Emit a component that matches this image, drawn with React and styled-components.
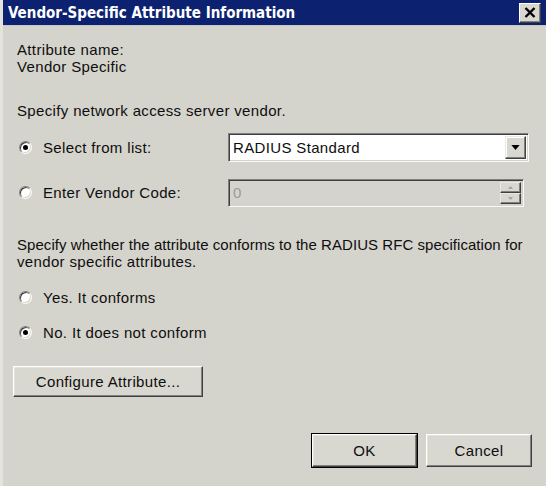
import React from "react";
import styled, { createGlobalStyle } from "styled-components";

const Global = createGlobalStyle`
  html, body { margin: 0; padding: 0; background: #d5d4cc; }
  body { font-family: "Liberation Sans", Arial, sans-serif; }
  * { box-sizing: border-box; }
`;

const Window = styled.div`
  width: 546px;
  height: 486px;
  display: flex;
  flex-direction: column;
  background: #d5d4cc;
  border-left: 3px solid #e4e4de;
  color: #0e0e0e;
  font-size: 15px;
  letter-spacing: 0.35px;
  overflow: hidden;
`;

const TitleBar = styled.div`
  height: 26px;
  flex: none;
  display: flex;
  align-items: center;
  justify-content: space-between;
  padding: 0 5px 0 5px;
  background: #0c2270;
  border-bottom: 1px solid #c9c8c0;
`;

const TitleText = styled.span`
  color: #fff;
  font-family: "DejaVu Sans Condensed", "DejaVu Sans", sans-serif;
  font-weight: bold;
  font-size: 15px;
  letter-spacing: 0;
`;

const CloseButton = styled.div`
  width: 22px;
  height: 20px;
  background: #d8d7d0;
  border: 1px solid;
  border-color: #fff #404040 #404040 #fff;
  box-shadow: inset -1px -1px 0 #808080;
  display: flex;
  align-items: center;
  justify-content: center;
`;

const Content = styled.div`
  flex: 1;
  display: flex;
  flex-direction: column;
  padding: 15px 14px 19px 14px;
`;

const Line = styled.div`
  line-height: 17px;
  white-space: nowrap;
  margin-top: ${(p) => p.$mt || 0}px;
  ${(p) => (p.$ls != null ? `letter-spacing: ${p.$ls}px;` : "")}
`;

const Row = styled.div`
  display: grid;
  grid-template-columns: 211px 1fr;
  align-items: center;
  height: ${(p) => p.$h || 29}px;
  margin-top: ${(p) => p.$mt || 0}px;
`;

const RadioLabel = styled.label`
  display: flex;
  align-items: center;
  gap: 11px;
  padding-left: 2px;
  line-height: 17px;
  white-space: nowrap;
  height: ${(p) => p.$h || 20}px;
  margin-top: ${(p) => p.$mt || 0}px;
`;

const RadioDot = styled.span`
  width: 13px;
  height: 13px;
  flex: none;
  border-radius: 50%;
  background: #fff;
  border: 1px solid;
  border-color: #7f7f7f #fafafa #fafafa #7f7f7f;
  box-shadow: inset 1px 1px 0 #404040, inset -1px -1px 0 #d4d3cb;
  position: relative;
  &::after {
    content: "";
    display: ${(p) => (p.$checked ? "block" : "none")};
    position: absolute;
    left: 3px;
    top: 3px;
    width: 5px;
    height: 5px;
    border-radius: 50%;
    background: #000;
  }
`;

const Sunken = styled.div`
  width: ${(p) => p.$w}px;
  height: ${(p) => p.$h}px;
  display: flex;
  align-items: center;
  background: ${(p) => (p.$disabled ? "#d5d4cc" : "#fff")};
  color: ${(p) => (p.$disabled ? "#9c9b96" : "#0e0e0e")};
  border: 1px solid;
  border-color: #7f7f7f #fafafa #fafafa #7f7f7f;
  box-shadow: inset 1px 1px 0 #404040, inset -1px -1px 0 #d4d3cb;
  padding: 2px 2px 2px 4px;
`;

const FieldText = styled.span`
  flex: 1;
  line-height: 17px;
`;

const ArrowButton = styled.div`
  width: 21px;
  height: 100%;
  background: #d8d7d0;
  border: 1px solid;
  border-color: #e8e8e4 #404040 #404040 #e8e8e4;
  box-shadow: inset -1px -1px 0 #808080, inset 1px 1px 0 #fff;
  display: flex;
  align-items: center;
  justify-content: center;
`;

const Spin = styled.div`
  width: 21px;
  height: 100%;
  display: flex;
  flex-direction: column;
`;

const SpinHalf = styled.div`
  flex: 1;
  background: #d8d7d0;
  border: 1px solid;
  border-color: #e8e8e4 #404040 #404040 #e8e8e4;
  box-shadow: inset -1px -1px 0 #808080;
  display: flex;
  align-items: center;
  justify-content: center;
`;

const Button = styled.button`
  width: ${(p) => p.$w}px;
  height: ${(p) => p.$h}px;
  font-family: "Liberation Sans", Arial, sans-serif;
  font-size: 15px;
  letter-spacing: 0.35px;
  color: #0e0e0e;
  background: #d8d7d0;
  border: 1px solid;
  border-color: #fff #404040 #404040 #fff;
  box-shadow: inset -1px -1px 0 #808080, inset 1px 1px 0 #e4e3dc
    ${(p) => (p.$default ? ", 0 0 0 1px #000" : "")};
  padding: 0;
  margin-left: ${(p) => p.$ml || 0}px;
  margin-top: ${(p) => p.$mt || 0}px;
`;

const ButtonRow = styled.div`
  margin-top: auto;
  display: flex;
  justify-content: flex-end;
  gap: 9px;
`;

export default function App() {
  return (
    <>
      <Global />
      <Window>
        <TitleBar>
          <TitleText>Vendor-Specific Attribute Information</TitleText>
          <CloseButton>
            <svg width="12" height="11" viewBox="0 0 12 11">
              <path d="M1.5 1 L10.5 10 M10.5 1 L1.5 10" stroke="#000" strokeWidth="2.4" />
            </svg>
          </CloseButton>
        </TitleBar>
        <Content>
          <Line>Attribute name:</Line>
          <Line>Vendor Specific</Line>
          <Line $mt={27}>Specify network access server vendor.</Line>
          <Row $mt={14} $h={29}>
            <RadioLabel>
              <RadioDot $checked />
              Select from list:
            </RadioLabel>
            <Sunken $w={301} $h={29}>
              <FieldText>RADIUS Standard</FieldText>
              <ArrowButton>
                <svg width="9" height="5" viewBox="0 0 10 6">
                  <path d="M0 0 L10 0 L5 6 Z" fill="#000" />
                </svg>
              </ArrowButton>
            </Sunken>
          </Row>
          <Row $mt={16} $h={29}>
            <RadioLabel>
              <RadioDot />
              Enter Vendor Code:
            </RadioLabel>
            <Sunken $w={296} $h={28} $disabled>
              <FieldText>0</FieldText>
              <Spin>
                <SpinHalf>
                  <svg width="5" height="3" viewBox="0 0 6 3"><path d="M0 3 L3 0 L6 3 Z" fill="#9a9a96" /></svg>
                </SpinHalf>
                <SpinHalf>
                  <svg width="5" height="3" viewBox="0 0 6 3"><path d="M0 0 L6 0 L3 3 Z" fill="#9a9a96" /></svg>
                </SpinHalf>
              </Spin>
            </Sunken>
          </Row>
          <Line $mt={29} $ls={0.05}>
            Specify whether the attribute conforms to the RADIUS RFC specification for
          </Line>
          <Line>vendor specific attributes.</Line>
          <RadioLabel $mt={17}>
            <RadioDot />
            Yes. It conforms
          </RadioLabel>
          <RadioLabel $mt={15}>
            <RadioDot $checked />
            No. It does not conform
          </RadioLabel>
          <Button $w={190} $h={31} $ml={-4} $mt={24}>
            Configure Attribute...
          </Button>
          <ButtonRow>
            <Button $w={105} $h={33} $default>
              OK
            </Button>
            <Button $w={106} $h={33}>
              Cancel
            </Button>
          </ButtonRow>
        </Content>
      </Window>
    </>
  );
}
